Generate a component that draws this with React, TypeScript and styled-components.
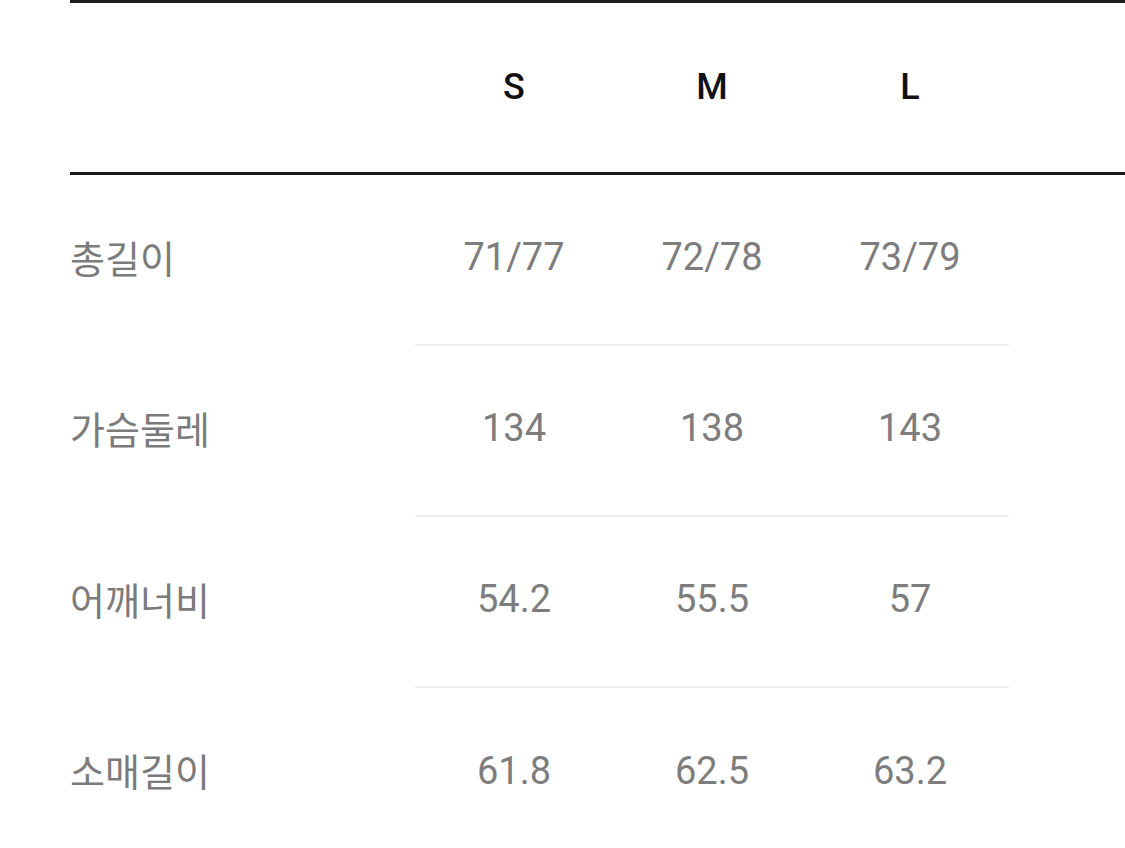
import styled, { createGlobalStyle } from "styled-components";

const GlobalStyle = createGlobalStyle`
    html, body {
        margin: 0;
        padding: 0;
        background: #fff;
        overflow: hidden;
    }
    body {
        font-family: Roboto, "Noto Sans CJK KR", sans-serif;
    }
`

const Page = styled.div`
    padding-left: 70px;
    width: 1125px;
    box-sizing: border-box;
    overflow: hidden;
`

const Table = styled.div`
    width: 1100px;
    display: flex;
    flex-direction: column;
`

const HeadRow = styled.div`
    display: grid;
    grid-template-columns: 345px repeat(3, 198px) 1fr;
    height: 169px;
    border-top: 3px solid #1c1c1c;
    border-bottom: 3px solid #1c1c1c;
    align-items: center;
`

const Row = styled.div`
    display: grid;
    grid-template-columns: 345px repeat(3, 198px) 1fr;
    height: 171px;
`

const HeadCell = styled.div`
    text-align: center;
    font-size: 36px;
    font-weight: 500;
    color: #111;
    padding-bottom: 2px;
`

const Label = styled.div`
    display: flex;
    align-items: center;
    font-family: "Noto Sans CJK KR", sans-serif;
    font-size: 38px;
    color: #7b7b7b;
    padding-bottom: 9px;
`

const Value = styled.div<{ $last: boolean }>`
    display: flex;
    align-items: center;
    justify-content: center;
    font-size: 38px;
    color: #7d7d7d;
    padding-bottom: 6px;
    border-bottom: ${(p) => (p.$last ? "none" : "2px solid #eeeeee")};
`

const sizes = ["S", "M", "L"]

const rows = [
    { label: "총길이", values: ["71/77", "72/78", "73/79"] },
    { label: "가슴둘레", values: ["134", "138", "143"] },
    { label: "어깨너비", values: ["54.2", "55.5", "57"] },
    { label: "소매길이", values: ["61.8", "62.5", "63.2"] },
]

export default function App() {
    return (
        <>
            <GlobalStyle />
            <Page>
                <Table>
                    <HeadRow>
                        <div />
                        {sizes.map((s) => (
                            <HeadCell key={s}>{s}</HeadCell>
                        ))}
                        <div />
                    </HeadRow>
                    {rows.map((row, i) => (
                        <Row key={row.label}>
                            <Label>{row.label}</Label>
                            {row.values.map((v, j) => (
                                <Value key={j} $last={i === rows.length - 1}>{v}</Value>
                            ))}
                            <div />
                        </Row>
                    ))}
                </Table>
            </Page>
        </>
    )
}
